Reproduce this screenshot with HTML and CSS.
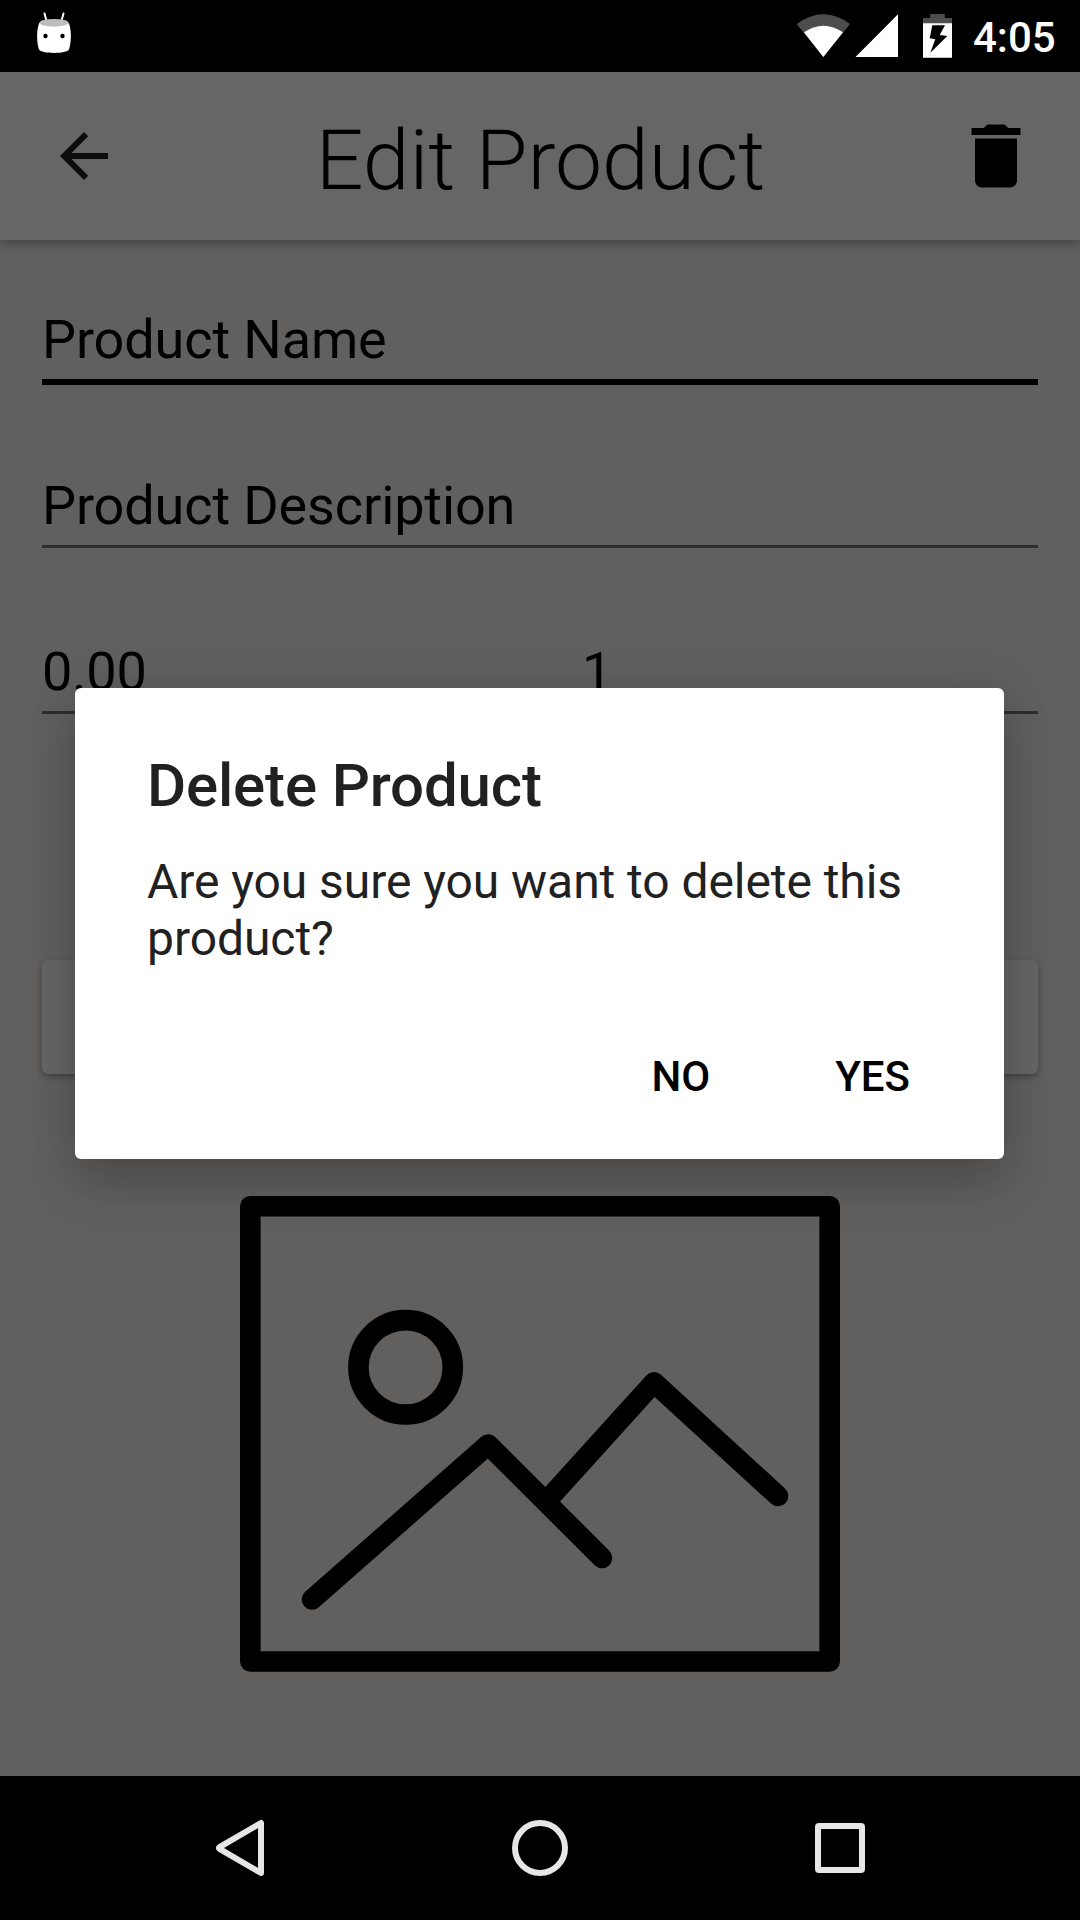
FILE: index.html
```html
<!DOCTYPE html>
<html lang="en">
<head>
<meta charset="utf-8">
<title>Edit Product</title>
<link rel="stylesheet" href="styles.css">
</head>
<body>
<div class="screen">
  <div class="status-bar">
    <svg class="status-droid" width="36" height="44" viewBox="36 11 36 44">
      <path d="M44.500 13.500l2.200 8M63.500 13.500l-2.200 8" stroke="#fff" stroke-width="2" stroke-linecap="round"/>
      <path d="M39 23.500C40 20.500 68 20.500 69 23.500C71.500 30 71.500 42 69 49.500C67 54 41 54 39 49.500C36.500 42 36.500 30 39 23.500Z" fill="#fff"/>
      <ellipse cx="54" cy="22.800" rx="14.500" ry="3.900" fill="#bdbdbd"/>
      <circle cx="45.500" cy="36" r="2.200"/><circle cx="62.500" cy="36" r="2.200"/>
    </svg>
    <div class="status-right">
      <svg class="wifi" width="54" height="44" viewBox="796 14 54 44">
        <path d="M796.700 24Q823.300 4.600 850 24L823.300 57Z" fill="#4d4d4d"/>
        <path d="M804 32.300Q823.300 19.300 843 32.300L823.300 57Z" fill="#fff"/>
      </svg>
      <svg class="signal" width="43" height="44" viewBox="855 14 43 44"><path d="M898 14.300V57H855.500Z" fill="#fff"/></svg>
      <svg class="battery" width="29" height="44" viewBox="923 14 29 44">
        <path d="M930.300 14h14.400v4H952v6h-29v-6h7.300z" fill="#4d4d4d"/>
        <path d="M923 23.200h29v34.500h-29z" fill="#fff"/>
        <path d="M932.300 25.300H945L939.700 35l7.600 1L930.300 52.700 935.300 39.300 929.700 38.300Z" fill="#000"/>
      </svg>
      <span class="clock">4:05</span>
    </div>
  </div>

  <main class="page">
    <header class="app-bar">
      <svg class="back" width="72" height="72" viewBox="0 0 24 24"><path d="M20 11H7.830l5.590-5.590L12 4l-8 8 8 8 1.410-1.410L7.830 13H20v-2z" fill="#222"/></svg>
      <h1 class="app-title">Edit Product</h1>
      <svg class="delete" width="84" height="84" viewBox="0 0 24 24"><path d="M6 19c0 1.100.9 2 2 2h8c1.100 0 2-.9 2-2V7H6v12zM19 4h-3.500l-1-1h-5l-1 1H5v2h14V4z"/></svg>
    </header>
    <div class="form">
      <div class="field field-active">Product Name</div>
      <div class="field">Product Description</div>
      <div class="field-row">
        <div class="field">0.00</div>
        <div class="field">1</div>
      </div>
      <div class="card-button"></div>
      <svg class="placeholder" width="600" height="476" viewBox="240 1196 600 476" fill="none" stroke="#000" stroke-width="20.600" stroke-linecap="round" stroke-linejoin="round">
        <path d="M250.300 1206.300H829.700V1661.500H250.300Z"/>
        <circle cx="405.600" cy="1367.300" r="47.200"/>
        <path d="M312 1599.500L488.200 1444.500 602 1558M547.500 1500L654 1382.300 778 1496"/>
      </svg>
    </div>
  </main>

  <nav class="nav-bar">
    <svg width="56" height="60" viewBox="212 1818 56 60"><path d="M261 1823V1873L219.500 1848.900Q218.200 1848 219.500 1847.100Z" fill="none" stroke="#e6e6e6" stroke-width="6" stroke-linejoin="round"/></svg>
    <svg width="60" height="60" viewBox="0 0 60 60"><circle cx="30" cy="30" r="25" fill="none" stroke="#e6e6e6" stroke-width="6"/></svg>
    <svg width="56" height="60" viewBox="812 1818 56 60"><rect x="818" y="1826" width="44" height="44" rx="1" fill="none" stroke="#e6e6e6" stroke-width="6"/></svg>
  </nav>

  <div class="scrim">
    <section class="dialog" role="dialog">
      <h2 class="dialog-title">Delete Product</h2>
      <p class="dialog-text">Are you sure you want to delete this product?</p>
      <div class="dialog-actions"><span>NO</span><span>YES</span></div>
    </section>
  </div>
</div>
</body>
</html>
```
FILE: styles.css
```css
* { box-sizing: border-box; margin: 0; padding: 0; }
body { font-family: Roboto, sans-serif; background: #000; }
svg { display: block; flex: none; }
.screen { position: relative; width: 1080px; height: 1920px; overflow: hidden; display: flex; flex-direction: column; background: #000; }

.status-bar { height: 72px; display: flex; justify-content: space-between; align-items: flex-start; padding: 11px 24px 0 36px; color: #fff; }
.status-right { display: flex; padding-top: 3px; }
.signal { margin-left: 5px; }
.battery { margin-left: 25px; }
.clock { margin-left: 21px; width: 83px; font-size: 42px; line-height: 48px; font-weight: 500; white-space: nowrap; }

.page { height: 1704px; background: #f4efeb; }
.app-bar { position: relative; height: 168px; display: flex; align-items: center; justify-content: space-between; padding: 0 42px 0 48px; background: #fff; box-shadow: 0 4px 10px rgba(0, 0, 0, .3); }
.app-title { font-size: 84px; line-height: 98px; font-weight: 300; padding-top: 10px; margin-left: 7px; white-space: nowrap; }
.form { padding: 68px 42px 0; display: flex; flex-direction: column; }
.field { height: 77px; margin-bottom: 89px; font-size: 54px; line-height: 63px; letter-spacing: -.12px; white-space: nowrap; }
.field::after { content: ""; display: block; height: 3px; margin-top: 8px; background: #747370; }
.field-active::after { height: 6px; background: #000; }
.field-row { display: grid; grid-template-columns: 1fr 1fr; column-gap: 84px; }
.card-button { height: 114px; margin-top: 154px; border-radius: 6px; background: #fff; box-shadow: 0 3px 6px rgba(0, 0, 0, .3); }
.placeholder { margin: 122px auto 0; }

.nav-bar { height: 144px; display: flex; align-items: center; justify-content: space-between; padding: 0 212px; }

.scrim { position: absolute; inset: 72px 0 144px; background: rgba(0, 0, 0, .6); padding: 616px 76px 0 75px; }
.dialog { height: 471px; padding: 62px 72px 0; border-radius: 6px; background: #fff; color: #212121; box-shadow: 0 26px 50px rgba(0, 0, 0, .19), 0 0 50px rgba(0, 0, 0, .1); }
.dialog-title { font-size: 60px; line-height: 72px; font-weight: 500; letter-spacing: -.16px; white-space: nowrap; }
.dialog-text { margin-top: 31px; font-size: 48px; line-height: 57px; letter-spacing: -.06px; }
.dialog-actions { display: flex; justify-content: flex-end; gap: 125px; margin-top: 85px; padding-right: 22px; font-size: 42px; line-height: 50px; font-weight: 500; color: #000; }
```
